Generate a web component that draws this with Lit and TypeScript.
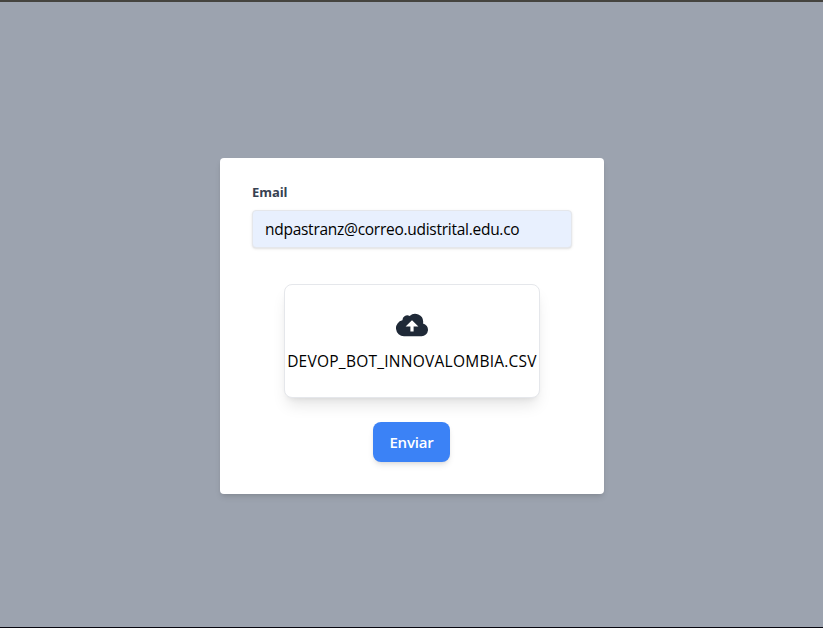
import { LitElement, html, css } from "lit";
import { customElement } from "lit/decorators.js";

@customElement("app-root")
class AppRoot extends LitElement {
  static styles = css`
    * { box-sizing: border-box; }
    :host {
      display: flex;
      flex-direction: column;
      align-items: center;
      height: 628px;
      padding-top: 156px;
      background: #9ca3af;
      border-top: 2px solid #45443f;
      border-bottom: 1px solid #07070f;
      box-sizing: border-box;
      font-family: "Open Sans", "Noto Sans", sans-serif;
      font-size: 16px;
      line-height: 24px;
      color: #000;
    }
    .card {
      display: flex;
      flex-direction: column;
      align-items: center;
      width: 384px;
      height: 336px;
      margin-left: 1px;
      padding: 24px 32px 32px;
      background: #fff;
      border-radius: 4px;
      box-shadow: 0 4px 6px -1px rgba(0,0,0,.1), 0 2px 4px -2px rgba(0,0,0,.1);
    }
    .label {
      align-self: flex-start;
      font-size: 14px;
      font-weight: 700;
      line-height: 20px;
      color: #374151;
      margin-bottom: 8px;
    }
    .label span, .enviar span, .file span { display: inline-block; white-space: nowrap; }
    .label span { font-size: 13px; letter-spacing: -0.08px; }
    .email {
      width: 320px;
      height: 38px;
      padding: 0 12px;
      border: 1px solid #e5e7eb;
      border-radius: 4px;
      background: #e8f0fe;
      box-shadow: 0 1px 3px rgba(0,0,0,.1), 0 1px 2px -1px rgba(0,0,0,.1);
      font: 400 15.5px/24px "Open Sans", "Noto Sans", sans-serif;
      letter-spacing: -0.27px;
      color: #000;
      outline: none;
    }
    .file {
      display: flex;
      flex-direction: column;
      align-items: center;
      width: 256px;
      height: 114px;
      margin-top: 36px;
      padding: 24px 0;
      border: 1px solid #e5e7eb;
      border-radius: 8px;
      background: #fff;
      box-shadow: 0 10px 15px -3px rgba(0,0,0,.1), 0 4px 6px -4px rgba(0,0,0,.1);
    }
    .cloud { width: 32px; height: 32px; fill: #1f2937; flex: none; }
    .file span { margin-top: 8px; font-size: 15.5px; letter-spacing: 0.25px; }
    .enviar {
      width: 77px;
      height: 40px;
      margin-top: 24px;
      margin-right: 1px;
      padding: 0;
      border: 0;
      border-radius: 8px;
      background: #3b82f6;
      color: #fff;
      font: 600 15px/24px "Open Sans", "Noto Sans", sans-serif;
      letter-spacing: -0.2px;
      box-shadow: 0 4px 6px -1px rgba(0,0,0,.1), 0 2px 4px -2px rgba(0,0,0,.1);
    }
  `;

  render() {
    return html`
      <form class="card">
        <label class="label" for="email"><span>Email</span></label>
        <input class="email" id="email" type="text" value="ndpastranz@correo.udistrital.edu.co" />
        <div class="file">
          <svg class="cloud" viewBox="0 0 20 20">
            <path d="M16.88 9.1A4 4 0 0 1 16 17H5a5 5 0 0 1-1-9.9V7a3 3 0 0 1 4.52-2.59A4.98 4.98 0 0 1 17 8c0 .38-.04.74-.12 1.1zM11 11h3l-4-4-4 4h3v3h2v-3z" />
          </svg>
          <span>DEVOP_BOT_INNOVALOMBIA.CSV</span>
        </div>
        <button class="enviar" type="button"><span>Enviar</span></button>
      </form>
    `;
  }
}
